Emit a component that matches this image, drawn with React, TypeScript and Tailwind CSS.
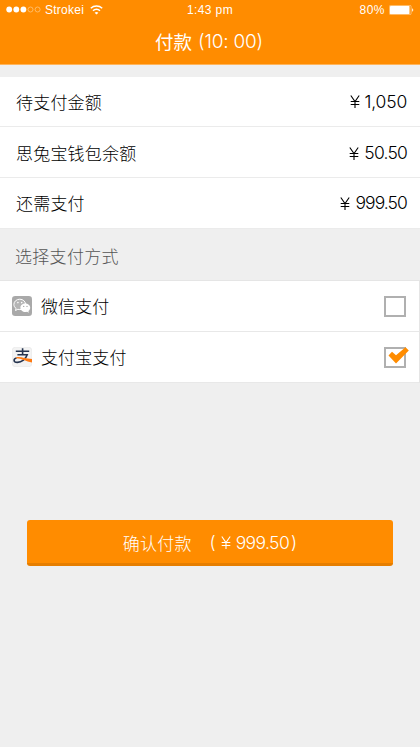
import React, { useState } from 'react';

const amounts = [
  { label: '待支付金额', value: '1,050', height: 'h-[50px]', tracking: 'tracking-[-0.2px]' },
  { label: '思兔宝钱包余额', value: '50.50', height: 'h-[51px] pt-[2px]', tracking: 'tracking-[-0.8px]' },
  { label: '还需支付', value: '999.50', height: 'h-[51px]', tracking: 'tracking-[-0.9px]' },
];

function Yen() {
  return (
    <svg viewBox="0 0 10 13" className="h-[13px] w-[10px]" fill="none" stroke="currentColor" strokeWidth="1.1">
      <path d="M.8.5 5 6.500l4.200-6M5 6.500V13M.7 6.500h8.600M.7 9.500h8.600" />
    </svg>
  );
}

function WechatIcon() {
  return (
    <svg viewBox="0 0 20 20" className="h-5 w-5">
      <rect width="20" height="20" rx="3.2" fill="#a9a9a9" />
      <path
        d="M7.800 3.200c-3.300 0-5.900 2.300-5.900 5.200 0 1.700.8 3.100 2.200 4.100l-.6 2 2.300-1.200c.7.200 1.300.3 2 .3 3.200 0 5.800-2.300 5.800-5.200S11 3.200 7.800 3.200Z"
        fill="#b5b5b5"
        stroke="#fff"
        strokeWidth="1"
      />
      <circle cx="5.900" cy="6.600" r=".8" fill="#fff" />
      <circle cx="9.700" cy="6.600" r=".8" fill="#fff" />
      <path
        d="M13.300 7.500c-2.800 0-4.900 1.900-4.900 4.200s2.200 4.300 4.900 4.300c.6 0 1.200-.1 1.700-.3l1.900 1-.5-1.700c1.100-.8 1.800-1.900 1.800-3.300 0-2.300-2.200-4.200-4.900-4.200Z"
        fill="#fff"
      />
      <circle cx="11.700" cy="10.400" r=".7" fill="#a9a9a9" />
      <circle cx="15" cy="10.400" r=".7" fill="#a9a9a9" />
    </svg>
  );
}

function AlipayIcon() {
  return (
    <svg viewBox="0 0 20 20" className="h-5 w-5" fill="none">
      <rect x=".25" y=".25" width="19.500" height="19.500" rx="3" fill="#f3f3f3" stroke="#e3e3e3" strokeWidth=".5" />
      <path
        d="M3.800 4.300h13.400M10.600 1.300v6.400M5.400 7.800h9.800C13.800 12 9.800 15.400 5.400 15.400c-4.300 0-4.200-3.700-.8-4.400"
        stroke="#25344f"
        strokeWidth="1.600"
      />
      <path d="M4 10.500c4-1.400 8.500 1.300 16 1.500v3.600C14 14.600 10 11.400 4 11.300Z" fill="#ff7a12" />
    </svg>
  );
}

const methods = [
  { id: 'wechat', label: '微信支付', icon: <WechatIcon /> },
  { id: 'alipay', label: '支付宝支付', icon: <AlipayIcon /> },
];

function StatusBar() {
  return (
    <div className="grid h-5 grid-cols-3 items-center pl-[6px] pr-[6px] font-['Liberation_Sans',sans-serif] text-[12px] leading-5">
      <div className="flex items-center">
        <svg viewBox="0 0 36 8" className="mr-[3px] h-2 w-9">
          <circle cx="3.200" cy="3.500" r="2.900" fill="#fff" />
          <circle cx="10.300" cy="3.500" r="2.900" fill="#fff" />
          <circle cx="17.400" cy="3.500" r="2.900" fill="#fff" />
          <circle cx="24.500" cy="3.500" r="2.500" fill="none" stroke="#ffc57c" strokeWidth=".8" />
          <circle cx="31.600" cy="3.500" r="2.500" fill="none" stroke="#ffc57c" strokeWidth=".8" />
        </svg>
        <span className="tracking-[0.25px]">Strokei</span>
        <svg viewBox="0 0 13 10" className="ml-[6px] h-[10px] w-[13px]" fill="none" stroke="#fff" strokeWidth="1.500">
          <path d="M.8 3.300c3.200-3 8.200-3 11.400 0M3 5.700c2-1.800 5-1.800 7 0" />
          <path d="M4.600 7.700c1-.9 2.800-.9 3.800 0L6.500 9.600Z" fill="#fff" stroke="none" />
        </svg>
      </div>
      <div className="text-center tracking-[0.4px]">1:43 pm</div>
      <div className="flex items-center justify-end">
        <span className="tracking-[0.5px]">80%</span>
        <svg viewBox="0 0 25 10" className="ml-[4px] h-[10px] w-[25px]">
          <rect x=".4" y=".4" width="21.700" height="9.200" rx="1.200" fill="none" stroke="#ffd7a3" strokeWidth=".7" />
          <rect x="1" y="1" width="19.500" height="8" rx=".6" fill="#fff" />
          <path d="M23.200 3.300c1.400.5 1.400 2.900 0 3.400Z" fill="#fff" />
        </svg>
      </div>
    </div>
  );
}

export default function App() {
  const [selected, setSelected] = useState('alipay');

  return (
    <div className="min-h-screen w-full bg-[#efefef] font-['Noto_Sans_CJK_SC',sans-serif] text-[17px] text-black">
      <header className="h-[65px] border-b border-[#ffb45a] bg-[#ff8c00] text-white">
        <StatusBar />
        <h1 className="flex h-[43px] items-center justify-center pr-[2px] text-[18.5px] font-normal leading-none">
          付款
          <span className="ml-[6px] font-['Inter',sans-serif] text-[19px] font-light tracking-[-0.2px]">(10: 00)</span>
        </h1>
      </header>

      {/* Amounts */}
      <section className="mt-3 bg-white">
        {amounts.map((row) => (
          <div key={row.label} className={`flex items-center justify-between border-b border-[#ebebeb] pl-[16px] pr-[13px] ${row.height}`}>
            <span className="font-light tracking-[0.2px]">{row.label}</span>
            <span className="flex items-center gap-[5px]">
              <Yen />
              <span className={`font-['Inter',sans-serif] text-[17.5px] font-light leading-none ${row.tracking}`}>
                {row.value}
              </span>
            </span>
          </div>
        ))}
      </section>

      <h2 className="flex h-[51px] items-center pl-[15px] pt-[2px] font-light tracking-[0.3px] text-[#555]">选择支付方式</h2>

      {/* Payment methods */}
      <section className="border-r border-t border-[#e5e5e5] bg-white">
        {methods.map((method) => (
          <button
            key={method.id}
            onClick={() => setSelected(method.id)}
            className="flex h-[51px] w-full items-center border-b border-[#e8e8e8] pl-[12px] pr-[13px]"
          >
            {method.icon}
            <span className="ml-[9px] font-light tracking-[0.1px]">{method.label}</span>
            <span className="relative ml-auto h-[21px] w-[22px] border-2 border-[#b0b0b0] bg-white">
              {selected === method.id && (
                <svg viewBox="0 0 22 17" className="absolute -top-[2px] left-[1px] h-[17px] w-[23px]">
                  <path d="M1 8.500 4.500 4.700 8.500 8.300 18 .2 21.300 3.500 8.500 16.500Z" fill="#ff8c00" />
                </svg>
              )}
            </span>
          </button>
        ))}
      </section>

      <button className="mx-[27px] mt-[137px] flex h-[46px] w-[366px] items-center justify-center rounded-[3px] border-b-[3px] border-[#e67e00] bg-[#ff8c00] pt-[2px] font-light text-white">
        <span className="tracking-[0.2px]">确认付款</span>
        <span className="ml-[18px] flex items-center font-['Inter',sans-serif] text-[17.5px] leading-none">
          (
          <span className="ml-[5px] mr-[5px]">
            <Yen />
          </span>
          <span className="mr-[2px] tracking-[-0.6px]">999.50</span>)
        </span>
      </button>
    </div>
  );
}
